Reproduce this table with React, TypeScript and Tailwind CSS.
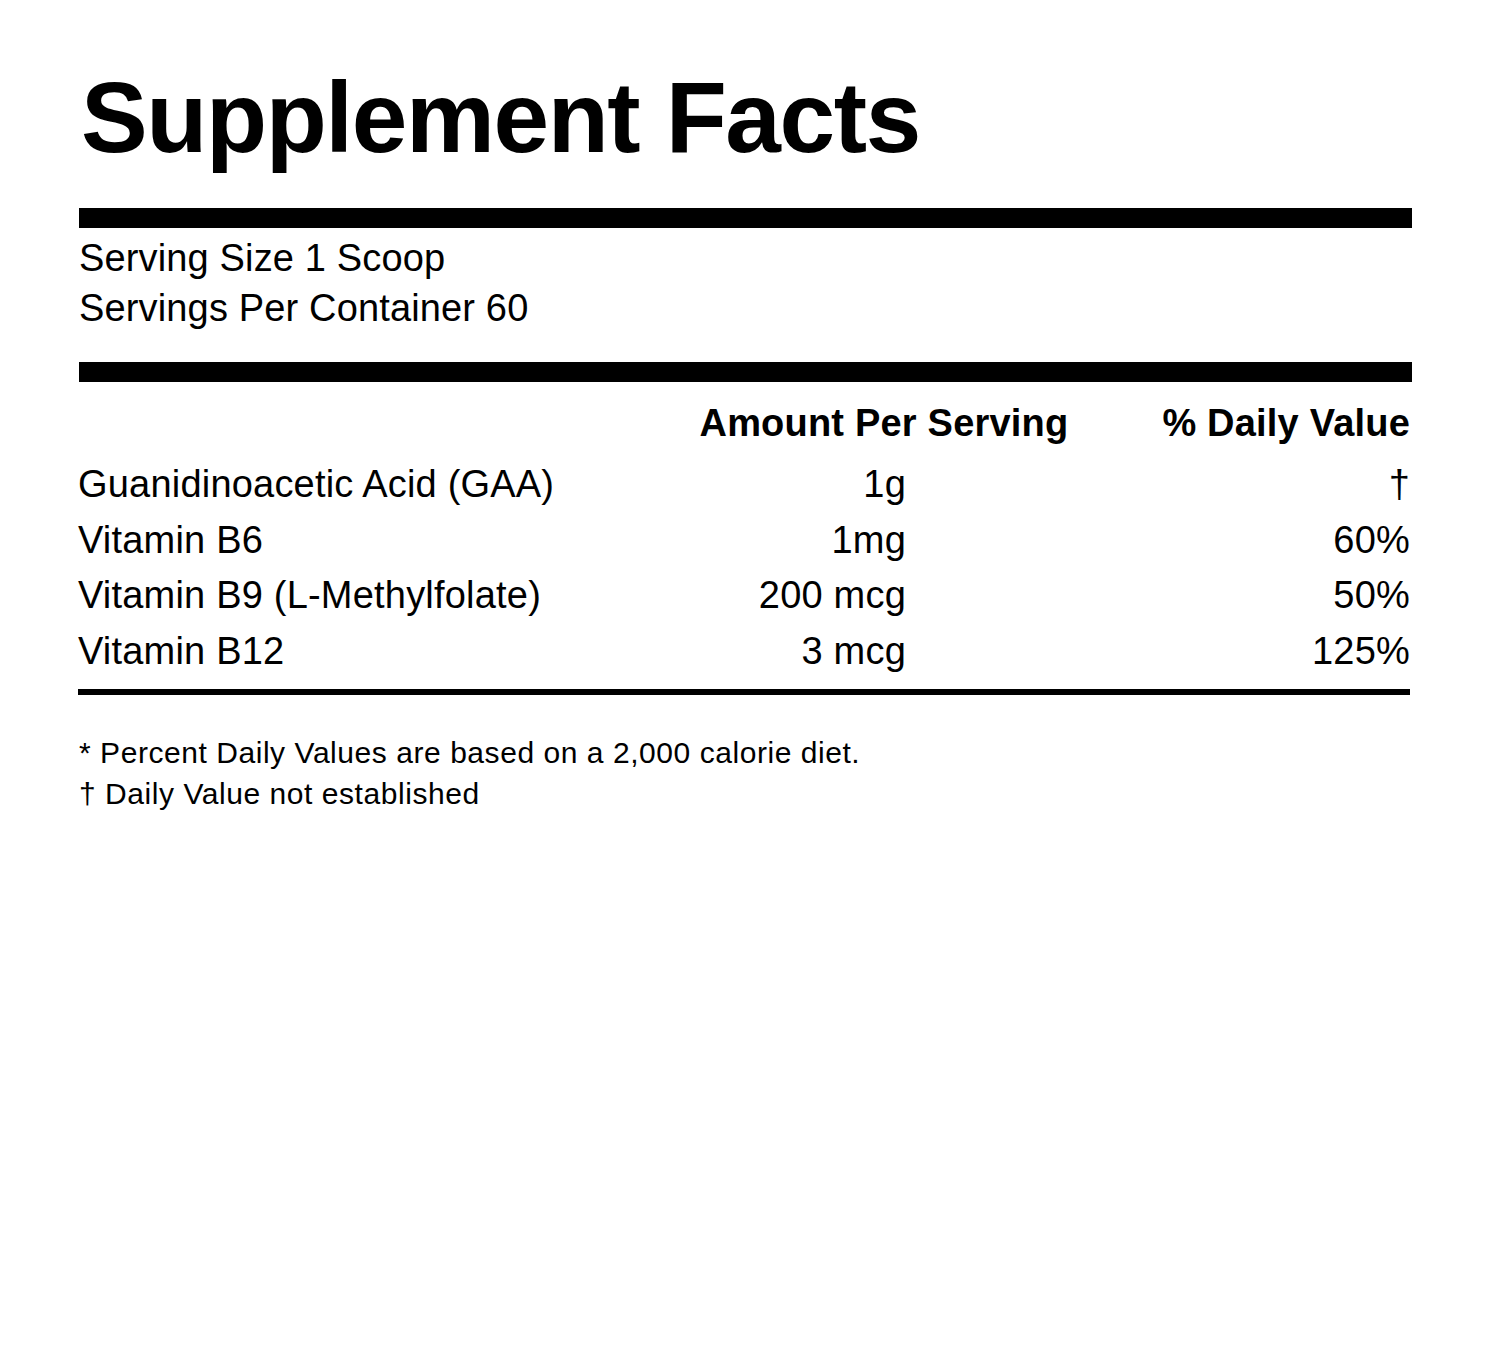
import React from "react";

interface Nutrient {
  name: string;
  amount: string;
  dv: string;
}

const nutrients: Nutrient[] = [
  { name: "Guanidinoacetic Acid (GAA)", amount: "1g", dv: "†" },
  { name: "Vitamin B6", amount: "1mg", dv: "60%" },
  { name: "Vitamin B9 (L-Methylfolate)", amount: "200 mcg", dv: "50%" },
  { name: "Vitamin B12", amount: "3 mcg", dv: "125%" },
];

const App = () => {
  return (
    <div className="min-h-[1350px] w-full bg-white pl-[79px] text-black [font-family:'Liberation_Sans',Arial,sans-serif]">
      <div className="w-[1333px] pt-[67px]">
        {/* Title */}
        <h1 className="ml-[2px] text-[100px] font-bold leading-[100px] tracking-[-1.4px]">
          Supplement Facts
        </h1>

        <div className="mt-[41px] h-[20px] bg-black" />

        {/* Serving info */}
        <div className="mt-[5px] text-[38px] leading-[50px] tracking-[0.15px]">
          <div>Serving Size 1 Scoop</div>
          <div>Servings Per Container 60</div>
        </div>

        <div className="mt-[29px] h-[20px] bg-black" />

        {/* Column headers */}
        <div className="mt-[17px] flex justify-end pr-[2px] text-[38px] font-bold leading-[48px] tracking-[0.2px]">
          <span>Amount Per Serving</span>
          <span className="ml-[94px]">% Daily Value</span>
        </div>

        {/* Rows */}
        <div className="mt-[10px] text-[38px] leading-[55.5px] tracking-[0.2px]">
          {nutrients.map((n) => (
            <div key={n.name} className="flex pr-[2px]">
              <div className="flex-1 -ml-px">{n.name}</div>
              <div className="w-[220px] text-right">{n.amount}</div>
              <div className="w-[504px] text-right">{n.dv}</div>
            </div>
          ))}
        </div>

        <div className="mt-[10px] -ml-px mr-[2px] h-[6px] bg-black" />

        {/* Footnotes */}
        <div className="mt-[37px] text-[30px] leading-[41px] tracking-[0.55px]">
          <div>* Percent Daily Values are based on a 2,000 calorie diet.</div>
          <div>† Daily Value not established</div>
        </div>
      </div>
    </div>
  );
};

export default App;
